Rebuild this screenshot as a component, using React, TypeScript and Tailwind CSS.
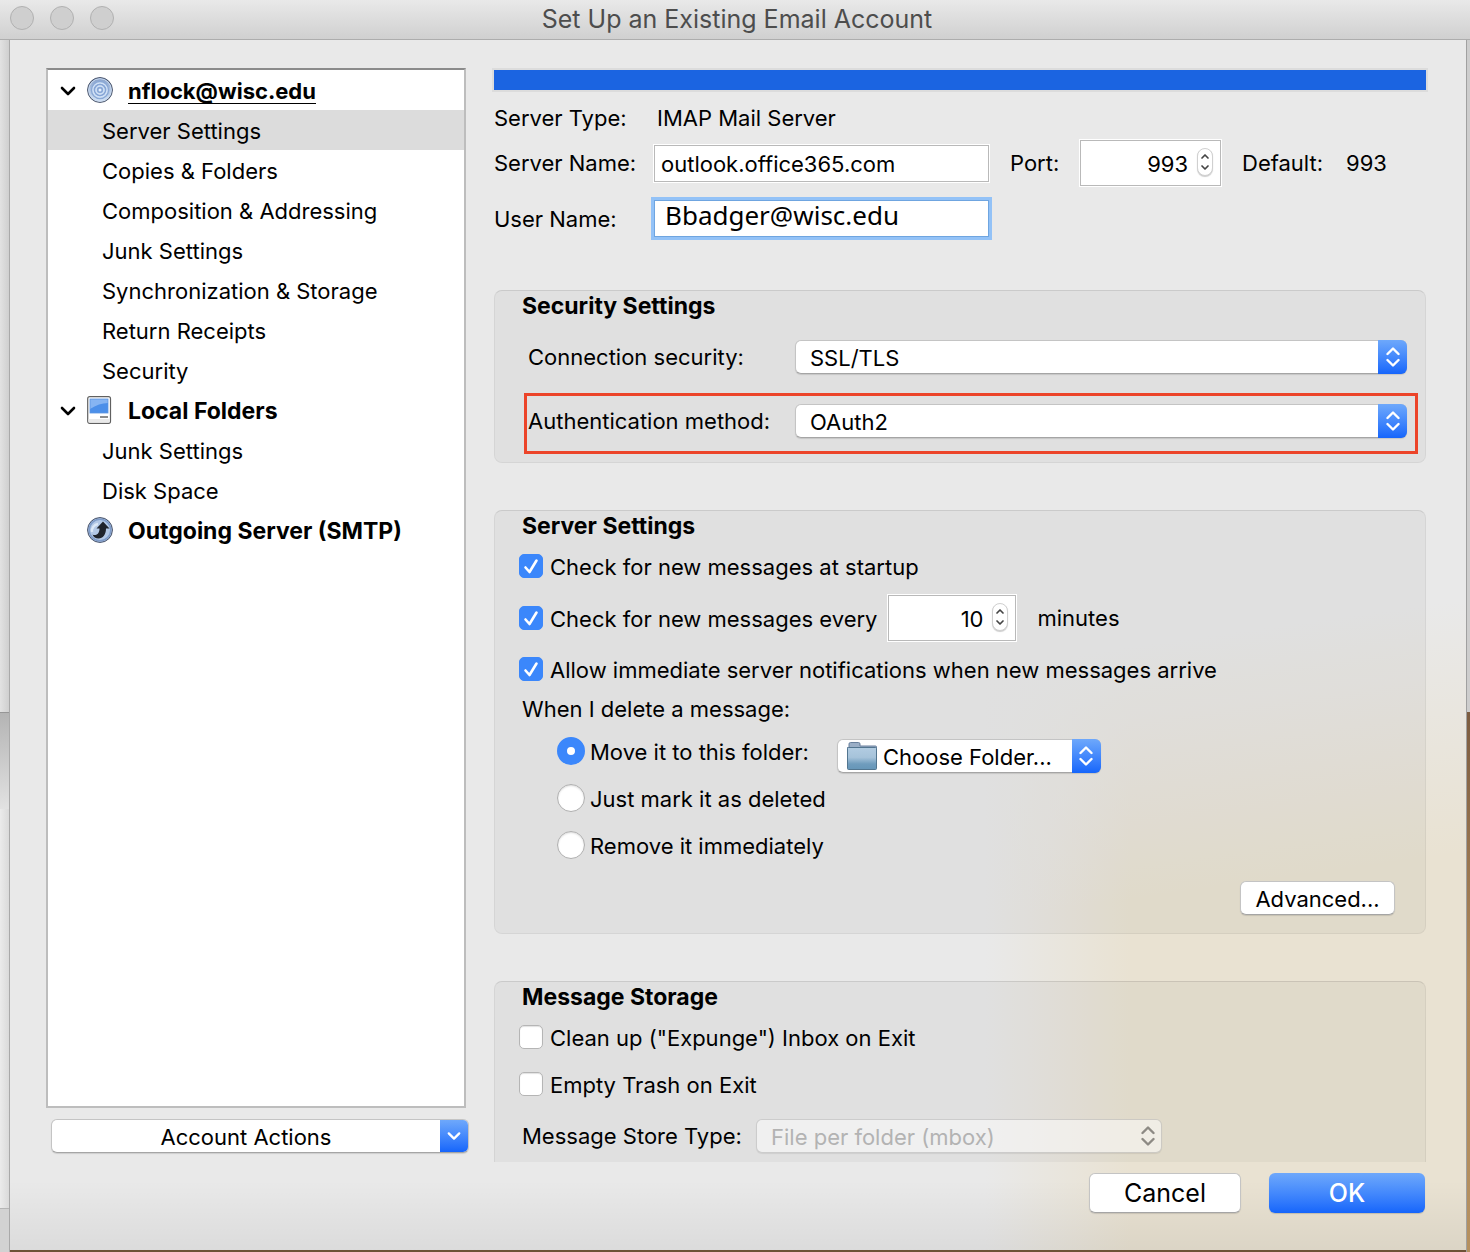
import type { ReactNode } from 'react'

const ACCOUNT_PAGES = [
  'Server Settings',
  'Copies & Folders',
  'Composition & Addressing',
  'Junk Settings',
  'Synchronization & Storage',
  'Return Receipts',
  'Security',
]

const LOCAL_PAGES = ['Junk Settings', 'Disk Space']

const ChevronDown = ({ className = "" }: { className?: string }) => (
  <svg viewBox="0 0 16 10" fill="none" stroke="currentColor" strokeWidth="2.6" strokeLinecap="round" strokeLinejoin="round" className={className} aria-hidden="true">
    <path d="M2 2l6 6 6-6" />
  </svg>
)

const UpDownArrows = ({ className = "" }: { className?: string }) => (
  <svg viewBox="0 0 14 22" fill="none" stroke="currentColor" strokeWidth="2.4" strokeLinecap="round" strokeLinejoin="round" className={className} aria-hidden="true">
    <path d="M1.5 8L7 2.5 12.500 8M1.500 14L7 19.500 12.500 14" />
  </svg>
)

const AccountIcon = () => (
  <svg viewBox="0 0 26 26" className="h-[26px] w-[26px]" aria-hidden="true">
    <defs>
      <linearGradient id="orb-fill" x1="0" y1="0" x2="0" y2="1">
        <stop offset="0" stopColor="#86a0ca" />
        <stop offset="1" stopColor="#d6e6f8" />
      </linearGradient>
    </defs>
    <circle cx="13" cy="13" r="12.400" fill="url(#orb-fill)" stroke="#404a60" strokeWidth="1" />
    <circle cx="13" cy="13" r="11.300" fill="none" stroke="#c9d9ee" strokeWidth="1" />
    <circle cx="13" cy="13" r="8.500" fill="none" stroke="#8ba9d6" strokeWidth="1.500" />
    <circle cx="13" cy="13" r="7" fill="none" stroke="#d0e1f6" strokeWidth="1.500" />
    <circle cx="13" cy="13" r="5.500" fill="none" stroke="#86a5d6" strokeWidth="1.500" />
    <circle cx="13" cy="13" r="4" fill="none" stroke="#d0e1f6" strokeWidth="1.500" />
    <circle cx="13" cy="13" r="3" fill="#86a5d6" />
    <circle cx="13" cy="13" r="1.500" fill="#e4effc" />
  </svg>
)

const LocalFoldersIcon = () => (
  <svg viewBox="0 0 26 28" className="h-7 w-[26px]" aria-hidden="true">
    <rect x="0.700" y="0.700" width="22.800" height="26.600" rx="2" fill="#fff" stroke="#606060" strokeWidth="1.200" />
    <path d="M1.500 23h21.200v3.500H1.500z" fill="#e9e9e9" />
    <rect x="3" y="3" width="18" height="14" fill="#4c8fe9" />
    <path d="M3 3h18v4C15 7 9 9 3 13z" fill="#86b4f2" />
    <rect x="3" y="3" width="18" height="14" fill="none" stroke="#5b93e0" strokeWidth="0.800" />
    <path d="M13 21h8" stroke="#707070" strokeWidth="1.600" />
  </svg>
)

const OutgoingIcon = () => (
  <svg viewBox="0 0 26 26" className="h-[26px] w-[26px]" aria-hidden="true">
    <circle cx="13" cy="13" r="12.400" fill="#b3c8e6" stroke="#404a60" strokeWidth="1" />
    <circle cx="13" cy="13" r="10.800" fill="none" stroke="#7f9cc9" strokeWidth="1.500" />
    <path d="M5 15a7 7 0 0 1 6-8" fill="none" stroke="#dce8f7" strokeWidth="2.400" />
    <path d="M16 4.500l6.500 7h-3.500c0 6-3 10-7.500 10-3 0-5-1.500-6-4 2 1.200 7 .8 7-6H9.500z" fill="#20242c" />
  </svg>
)

const FolderIcon = () => (
  <svg viewBox="0 0 32 30" className="h-[30px] w-8" aria-hidden="true">
    <defs>
      <linearGradient id="folder-fill" x1="0" y1="0" x2="0" y2="1">
        <stop offset="0" stopColor="#b2cce2" />
        <stop offset="0.450" stopColor="#a6c3da" />
        <stop offset="0.750" stopColor="#6f9cbd" />
        <stop offset="1" stopColor="#6696b8" />
      </linearGradient>
    </defs>
    <path d="M3 7V3q0-1.500 1.500-1.500h8Q14 1.500 14 3v2h15.500q1 0 1 1v4H1.500V6.500z" fill="#9aaec6" stroke="#687f9c" />
    <rect x="1.500" y="6.500" width="29" height="22" rx="1" fill="url(#folder-fill)" stroke="#52758f" />
  </svg>
)

const Check = ({ id, label, checked = false }: { id: string; label: string; checked?: boolean }) => (
  <div className="flex items-center gap-[7px]">
    <span className="relative h-6 w-6 shrink-0">
      <input
        id={id}
        type="checkbox"
        defaultChecked={checked}
        className="peer block h-6 w-6 appearance-none rounded-[5px] border border-[#b5b5b5] bg-white shadow-[inset_0_1px_1px_rgba(0,0,0,0.12)] checked:border-[#3b87fb] checked:bg-[#3b87fb] checked:shadow-none"
      />
      <svg viewBox="0 0 24 24" fill="none" stroke="#fff" strokeWidth="2.600" strokeLinecap="round" strokeLinejoin="round" className="pointer-events-none absolute inset-0 hidden peer-checked:block" aria-hidden="true">
        <path d="M6.500 13.500l4 4.500L17.500 6.500" />
      </svg>
    </span>
    <label htmlFor={id} className="pt-[2px] leading-[26px]">{label}</label>
  </div>
)

const Radio = ({ id, label, checked = false }: { id: string; label: string; checked?: boolean }) => (
  <div className="flex items-center gap-[5px]">
    <input
      id={id}
      type="radio"
      name="delete-action"
      defaultChecked={checked}
      className="block h-7 w-7 shrink-0 appearance-none rounded-full border border-[#b0b0b0] bg-white shadow-[inset_0_1px_2px_rgba(0,0,0,0.15)] checked:border-[10px] checked:border-[#3b87fb] checked:shadow-none"
    />
    <label htmlFor={id} className="pt-[2px] leading-[26px]">{label}</label>
  </div>
)

const Select = ({ id, value, label, className = "", icon }: { id: string; value: string; label?: string; className?: string; icon?: ReactNode }) => (
  <div className={`relative h-[34px] ${className}`}>
    <select
      id={id}
      aria-label={label}
      className={`h-full w-full appearance-none rounded-md border border-[#c4c4c4] border-b-[#a5a5a5] bg-white pt-[2px] pr-8 shadow-[0_1px_1px_rgba(0,0,0,0.12)] ${icon ? 'pl-[45px]' : 'pl-[14px]'}`}
    >
      <option>{value}</option>
    </select>
    {icon && <span className="pointer-events-none absolute top-[2px] left-[9px]">{icon}</span>}
    <span className="pointer-events-none absolute inset-y-0 right-0 flex w-[29px] items-center justify-center rounded-r-md bg-linear-to-b from-[#6ea8fb] to-[#1565fb] text-white">
      <UpDownArrows className="h-[22px] w-[14px]" />
    </span>
  </div>
)

const NumberBox = ({ id, value, label, className = "" }: { id: string; value: number; label?: string; className?: string }) => (
  <div className={`relative h-[46px] ${className}`}>
    <input
      id={id}
      type="number"
      aria-label={label}
      defaultValue={value}
      className="h-full w-full appearance-none border border-[#b9b9b9] bg-white pt-[2px] pr-8 text-right shadow-[0_0_0_1px_#fff] outline-none [-moz-appearance:textfield] [&::-webkit-inner-spin-button]:appearance-none"
    />
    <span className="pointer-events-none absolute top-2 right-2 flex h-7 w-4 items-center justify-center rounded-full border border-[#d0d0d0] bg-white text-[#444] shadow-[0_1px_1px_rgba(0,0,0,0.2)]">
      <svg viewBox="0 0 10 18" fill="none" stroke="currentColor" strokeWidth="1.700" strokeLinecap="round" strokeLinejoin="round" className="h-[18px] w-[10px]" aria-hidden="true">
        <path d="M2 5l3-3 3 3M2 13l3 3 3-3" />
      </svg>
    </span>
  </div>
)

const Panel = ({ title, children, className = "" }: { title: string; children: ReactNode; className?: string }) => (
  <section className={`border border-black/5 border-t-black/10 bg-black/[0.035] ${className}`}>
    <h2 className="pl-[27px] text-[23px] leading-[30px] font-bold">{title}</h2>
    {children}
  </section>
)

const PageLink = ({ name, active = false }: { name: string; active?: boolean }) => (
  <li>
    <a href="#" className={`block h-10 pl-[54px] leading-[42px] ${active ? 'bg-[#dcdcdc]' : ''}`}>{name}</a>
  </li>
)

const Sidebar = () => (
  <div className="flex w-[423px] shrink-0 flex-col pb-[9px]">
    <nav className="mr-[3px] flex-1 border-2 border-[#bdbdbd] border-t-[#8b8b8b] bg-white">
      <div className="flex h-10 items-center pl-3">
        <ChevronDown className="mt-[2px] mr-[11px] h-[10px] w-4" />
        <AccountIcon />
        <a href="#" className="mt-[2px] ml-[15px] border-b border-black leading-6 font-bold">nflock@wisc.edu</a>
      </div>
      <ul>
        {ACCOUNT_PAGES.map((name, i) => (
          <PageLink key={name} name={name} active={i === 0} />
        ))}
      </ul>
      <div className="flex h-10 items-center pl-3">
        <ChevronDown className="mt-[2px] mr-[11px] h-[10px] w-4" />
        <LocalFoldersIcon />
        <a href="#" className="mt-[2px] ml-[15px] text-[23px] leading-6 font-bold">Local Folders</a>
      </div>
      <ul>
        {LOCAL_PAGES.map((name) => (
          <PageLink key={name} name={name} />
        ))}
      </ul>
      <div className="flex h-10 items-center pl-[39px]">
        <OutgoingIcon />
        <a href="#" className="mt-[2px] ml-[15px] text-[23px] leading-6 font-bold">Outgoing Server (SMTP)</a>
      </div>
    </nav>
    <button type="button" className="mt-[11px] ml-[5px] flex h-[34px] items-stretch overflow-hidden rounded-md border border-[#c4c4c4] border-b-[#a5a5a5] bg-white shadow-[0_1px_1px_rgba(0,0,0,0.12)]">
      <span className="flex-1 leading-[34px]">Account Actions</span>
      <span className="flex w-7 items-center justify-center bg-linear-to-b from-[#6ea8fb] to-[#1565fb] text-white">
        <ChevronDown className="h-[10px] w-[14px]" />
      </span>
    </button>
  </div>
)

const ServerForm = () => (
  <>
    <div className="-mx-[2px] h-6 border-2 border-[#dcdcdc] bg-[#1b64e1]" />
    <div className="mt-2 flex h-9 items-center">
      <span className="w-[163px]">Server Type:</span>
      <span>IMAP Mail Server</span>
    </div>
    <div className="mt-1 flex items-center">
      <label htmlFor="server-name" className="w-40">Server Name:</label>
      <input id="server-name" defaultValue="outlook.office365.com" className="h-[37px] w-[335px] border border-[#b9b9b9] bg-white px-[6px] pt-[2px] shadow-[0_0_0_1px_#fff] outline-none" />
      <label htmlFor="port" className="ml-[21px] w-[70px]">Port:</label>
      <NumberBox id="port" value={993} className="w-[141px]" />
      <span className="ml-[21px] w-[104px]">Default:</span>
      <span>993</span>
    </div>
    <div className="mt-[14px] flex items-center">
      <label htmlFor="user-name" className="w-40">User Name:</label>
      <input id="user-name" defaultValue="Bbadger@wisc.edu" className="h-[37px] w-[335px] border border-[#6fa5e0] bg-white px-[10px] pb-[7px] font-['Noto_Sans',sans-serif] text-[26px] shadow-[0_0_0_3px_#93c2f7] outline-none" />
    </div>
  </>
)

export default function App() {
  return (
    <div className="flex min-h-screen flex-col bg-[#e9e9e9] font-[Inter,'Liberation_Sans',sans-serif] text-[22px] leading-7 text-black">
      <header className="relative flex h-10 items-center justify-center border-b border-[#adadad] bg-linear-to-b from-[#e9e9e9] to-[#d0d0d0] pb-[2px] pl-1">
        <div className="absolute top-[6px] left-[10px] flex gap-4">
          <button type="button" aria-label="Close" className="h-6 w-6 rounded-full border border-[#b1b1b1] bg-[#cfcfcf]" />
          <button type="button" aria-label="Minimize" className="h-6 w-6 rounded-full border border-[#b1b1b1] bg-[#cfcfcf]" />
          <button type="button" aria-label="Zoom" className="h-6 w-6 rounded-full border border-[#b1b1b1] bg-[#cfcfcf]" />
        </div>
        <h1 className="text-[25px] text-[#4d4d4d]">Set Up an Existing Email Account</h1>
      </header>

      <div className="flex flex-1">
        {/* windows behind the sheet */}
        <div className="flex w-[10px] shrink-0 flex-col border-r border-[#a9a9a9]">
          <div className="h-[673px] border-b border-[#969696] bg-linear-to-r from-[#e2e2e2] to-[#cfcfcf]" />
          <div className="h-24 bg-linear-to-b from-[#b4b4b4] to-[#e2e2e2]" />
          <div className="flex-1 bg-linear-to-r from-[#ebebeb] to-[#dadada]" />
          <div className="h-11 border-t border-[#b5b5b5] bg-[#d2d2d2]" />
        </div>

        <main className="flex flex-1 flex-col border-b-2 border-[#6d5136] bg-[linear-gradient(to_top,rgba(0,0,0,0.06),transparent_70px),linear-gradient(172deg,#e9e9e9_0%,#e9e9e9_54%,rgba(233,233,233,0)_72%),linear-gradient(to_right,rgba(233,226,208,0)_67%,#e9e2d2_77%)] pt-7 pl-9">
          <div className="flex">
            <Sidebar />
            <div className="ml-[25px] flex-1 pr-10">
              <ServerForm />

              <Panel title="Security Settings" className="mt-[53px] rounded-lg pb-2">
                <div className="mt-[19px] flex items-center pr-[18px] pl-[33px]">
                  <label htmlFor="connection" className="w-[267px]">Connection security:</label>
                  <Select id="connection" value="SSL/TLS" className="flex-1" />
                </div>
                <div className="mt-[19px] mr-[7px] ml-[29px] flex border-3 border-[#ec4429] pt-2 pr-2 pb-[13px] pl-px">
                  <label htmlFor="auth" className="w-[267px] leading-[34px]">Authentication method:</label>
                  <Select id="auth" value="OAuth2" className="flex-1" />
                </div>
              </Panel>

              <Panel title="Server Settings" className="mt-[47px] rounded-lg pr-[30px] pb-[18px] pl-0">
                <div className="pl-6">
                  <div className="mt-[11px]">
                    <Check id="startup" label="Check for new messages at startup" checked />
                  </div>
                  <div className="mt-[15px] flex items-center">
                    <Check id="every" label="Check for new messages every" checked />
                    <NumberBox id="interval" value={10} label="Minutes between checks" className="ml-[11px] w-32" />
                    <span className="ml-[21px]">minutes</span>
                  </div>
                  <div className="mt-[14px]">
                    <Check id="notify" label="Allow immediate server notifications when new messages arrive" checked />
                  </div>
                </div>
                <fieldset className="mt-3 pl-[27px]">
                  <legend>When I delete a message:</legend>
                  <div className="mt-[14px] pl-[35px]">
                    <div className="flex items-start">
                      <Radio id="move" label="Move it to this folder:" checked />
                      <Select id="folder" value="Choose Folder..." label="Folder for deleted messages" className="mt-[2px] ml-7 w-[264px]" icon={<FolderIcon />} />
                    </div>
                    <div className="mt-[11px]">
                      <Radio id="mark" label="Just mark it as deleted" />
                    </div>
                    <div className="mt-[19px]">
                      <Radio id="remove" label="Remove it immediately" />
                    </div>
                  </div>
                </fieldset>
                <div className="mt-[22px] flex justify-end">
                  <button type="button" className="h-[34px] w-[155px] rounded-md border border-[#c4c4c4] border-b-[#a5a5a5] bg-white pt-[2px] shadow-[0_1px_1px_rgba(0,0,0,0.12)]">Advanced...</button>
                </div>
              </Panel>

              <Panel title="Message Storage" className="mt-[47px] rounded-t-lg border-b-0 pb-[9px]">
                <div className="mt-[11px] pl-6">
                  <Check id="expunge" label={'Clean up ("Expunge") Inbox on Exit'} />
                </div>
                <div className="mt-[19px] pl-6">
                  <Check id="empty-trash" label="Empty Trash on Exit" />
                </div>
                <div className="mt-[21px] flex items-center pl-[27px]">
                  <label htmlFor="store" className="w-[234px]">Message Store Type:</label>
                  <div className="relative h-[34px] w-[406px]">
                    <select id="store" disabled className="h-full w-full appearance-none rounded-md border border-black/15 bg-white/50 pt-[2px] pr-8 pl-[14px] text-[#b3b3b3] opacity-100 shadow-[0_1px_1px_rgba(0,0,0,0.08)]">
                      <option>File per folder (mbox)</option>
                    </select>
                    <UpDownArrows className="pointer-events-none absolute top-[6px] right-[7px] h-[22px] w-[14px] text-[#8d8a84]" />
                  </div>
                </div>
              </Panel>
            </div>
          </div>

          <footer className="flex justify-end gap-7 pt-[11px] pr-[41px] pb-[37px] text-[25px]">
            <button type="button" className="h-10 w-[152px] rounded-md border border-[#c4c4c4] border-b-[#a5a5a5] bg-white shadow-[0_1px_1px_rgba(0,0,0,0.12)]">Cancel</button>
            <button type="submit" className="h-10 w-[156px] rounded-md bg-linear-to-b from-[#6ea8fb] to-[#1565fb] font-medium text-white shadow-[0_1px_1px_rgba(0,0,0,0.15)]">OK</button>
          </footer>
        </main>

        {/* desktop showing past the right edge */}
        <div className="flex w-1 shrink-0 flex-col border-l border-[#a0a0a0]">
          <div className="h-[672px] bg-[#cdcdcd]" />
          <div className="flex-1 bg-linear-to-b from-[#7c5c40] via-[#b08a5c] to-[#b5905f]" />
        </div>
      </div>
    </div>
  )
}
